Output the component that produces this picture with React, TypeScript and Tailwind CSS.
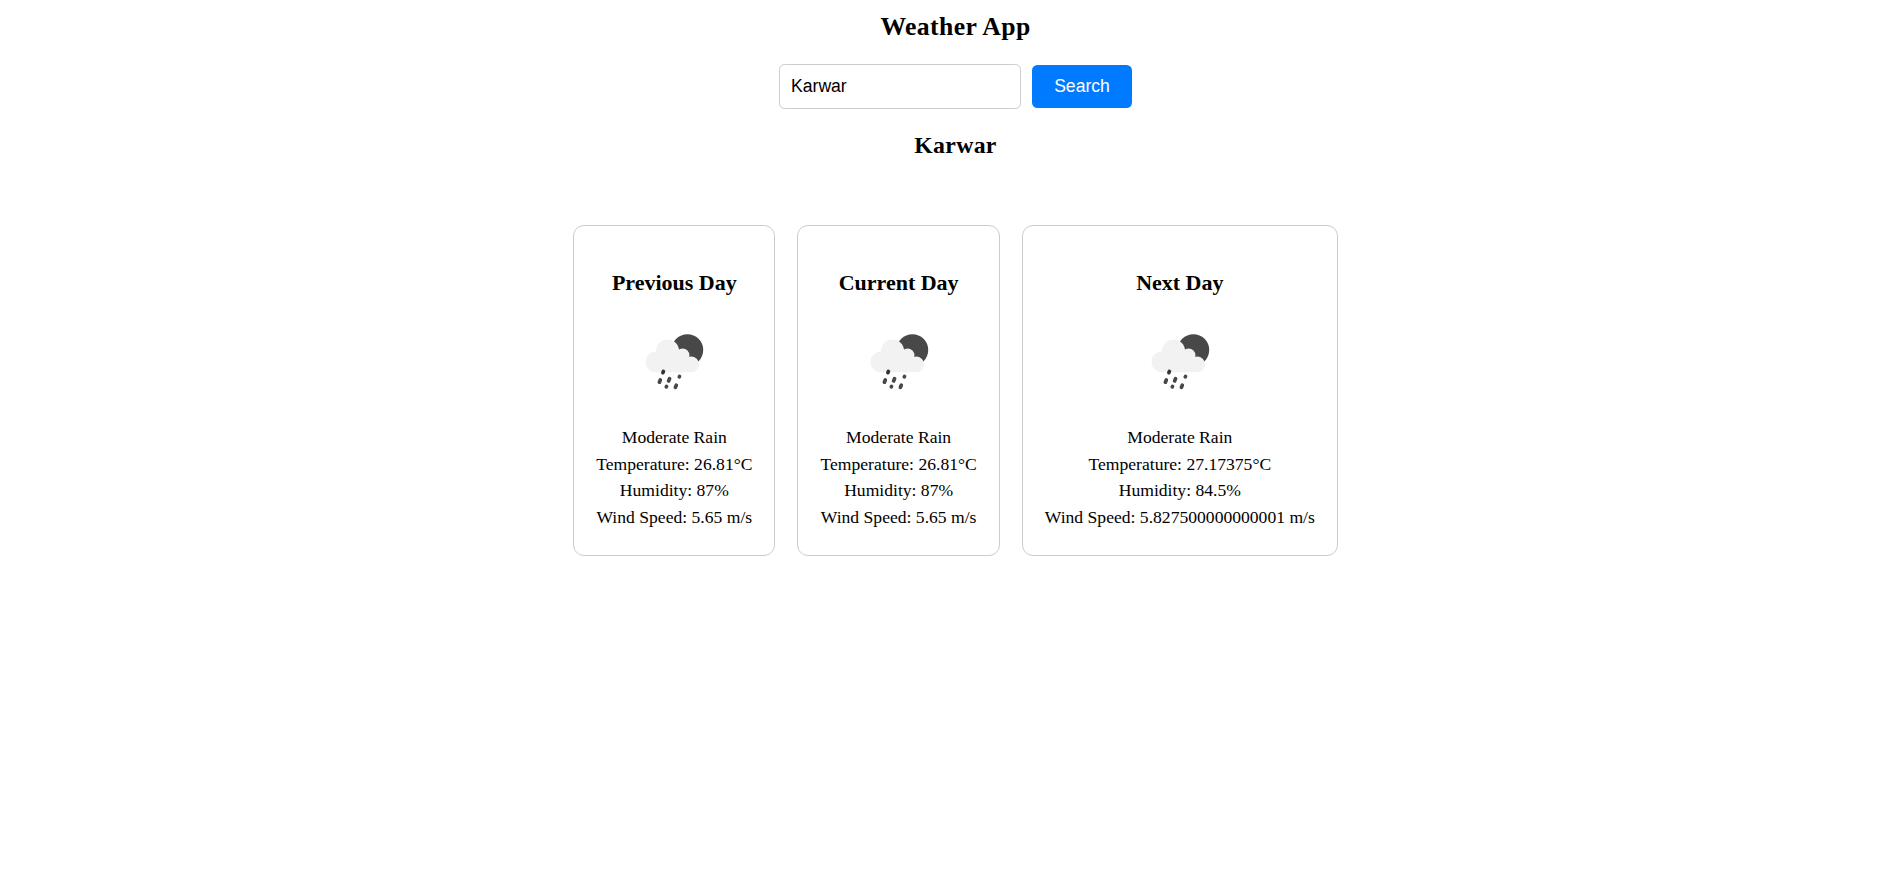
type Day = {
  title: string;
  condition: string;
  temperature: string;
  humidity: string;
  wind: string;
};

const days: Day[] = [
  { title: "Previous Day", condition: "Moderate Rain", temperature: "26.81", humidity: "87", wind: "5.65" },
  { title: "Current Day", condition: "Moderate Rain", temperature: "26.81", humidity: "87", wind: "5.65" },
  { title: "Next Day", condition: "Moderate Rain", temperature: "27.17375", humidity: "84.5", wind: "5.827500000000001" },
];

function RainIcon() {
  return (
    <svg viewBox="-0.5 0 110 110" className="size-[110px]" aria-hidden="true">
      <circle cx="67.9" cy="42" r="15.8" fill="#484848" />
      <g fill="#f2f2f2">
        <circle cx="36.4" cy="53.9" r="10.4" />
        <circle cx="48" cy="42.9" r="11.5" />
        <circle cx="63.1" cy="47.2" r="6.8" />
        <circle cx="71.6" cy="56.4" r="7.9" />
        <path d="M36 46 H66 L70 50 V64.3 H36 Z" />
      </g>
      <g stroke="#484848" strokeWidth="3.7" strokeLinecap="round">
        <path d="M43.9 63.4 L43.4 64.7" stroke="#333" />
        <path d="M40.8 72 L39.9 74.2" />
        <path d="M50.1 70.6 L49.1 72.9" />
        <path d="M60 68.5 L59.8 68.9" />
        <path d="M47 78.5 L46.8 78.9" />
        <path d="M56.8 77.2 L55.9 79.4" />
      </g>
    </svg>
  );
}

function DayCard({ day }: { day: Day }) {
  return (
    <section className="flex h-[331px] flex-col items-center rounded-[11px] border border-[#ccc] px-[22px] pt-[44px] leading-[26.6px]">
      <h3 className="text-[22px] font-bold leading-[26px]">{day.title}</h3>
      <div className="mt-[12px] mb-[6px]">
        <RainIcon />
      </div>
      <p>{day.condition}</p>
      <p>Temperature: {day.temperature}°C</p>
      <p>Humidity: {day.humidity}%</p>
      <p>Wind Speed: {day.wind} m/s</p>
    </section>
  );
}

export default function App() {
  return (
    <main className="flex min-h-screen flex-col items-center bg-white pt-[12px] pl-[8px] font-['Liberation_Serif',serif] text-[17.6px] text-black">
      <h2 className="text-[25.7px] font-bold leading-[30px] tracking-[0.4px]">Weather App</h2>
      <form className="mt-[22px] flex items-center gap-[11px]" onSubmit={(e) => e.preventDefault()}>
        <input
          type="text"
          defaultValue="Karwar"
          className="h-[45px] w-[242px] rounded-[5.5px] border border-[#ccc] px-[11px] font-['Liberation_Sans',sans-serif] text-[17.6px] outline-none"
        />
        <button
          type="submit"
          className="h-[43px] w-[100px] rounded-[5.5px] bg-[#007bff] font-['Liberation_Sans',sans-serif] text-[17.6px] text-white"
        >
          Search
        </button>
      </form>
      <h2 className="mt-[21px] text-[23.8px] font-bold leading-[30px] tracking-[0.3px]">Karwar</h2>
      <div className="mt-[65px] flex gap-[22px]">
        {days.map((day) => (
          <DayCard key={day.title} day={day} />
        ))}
      </div>
    </main>
  );
}
